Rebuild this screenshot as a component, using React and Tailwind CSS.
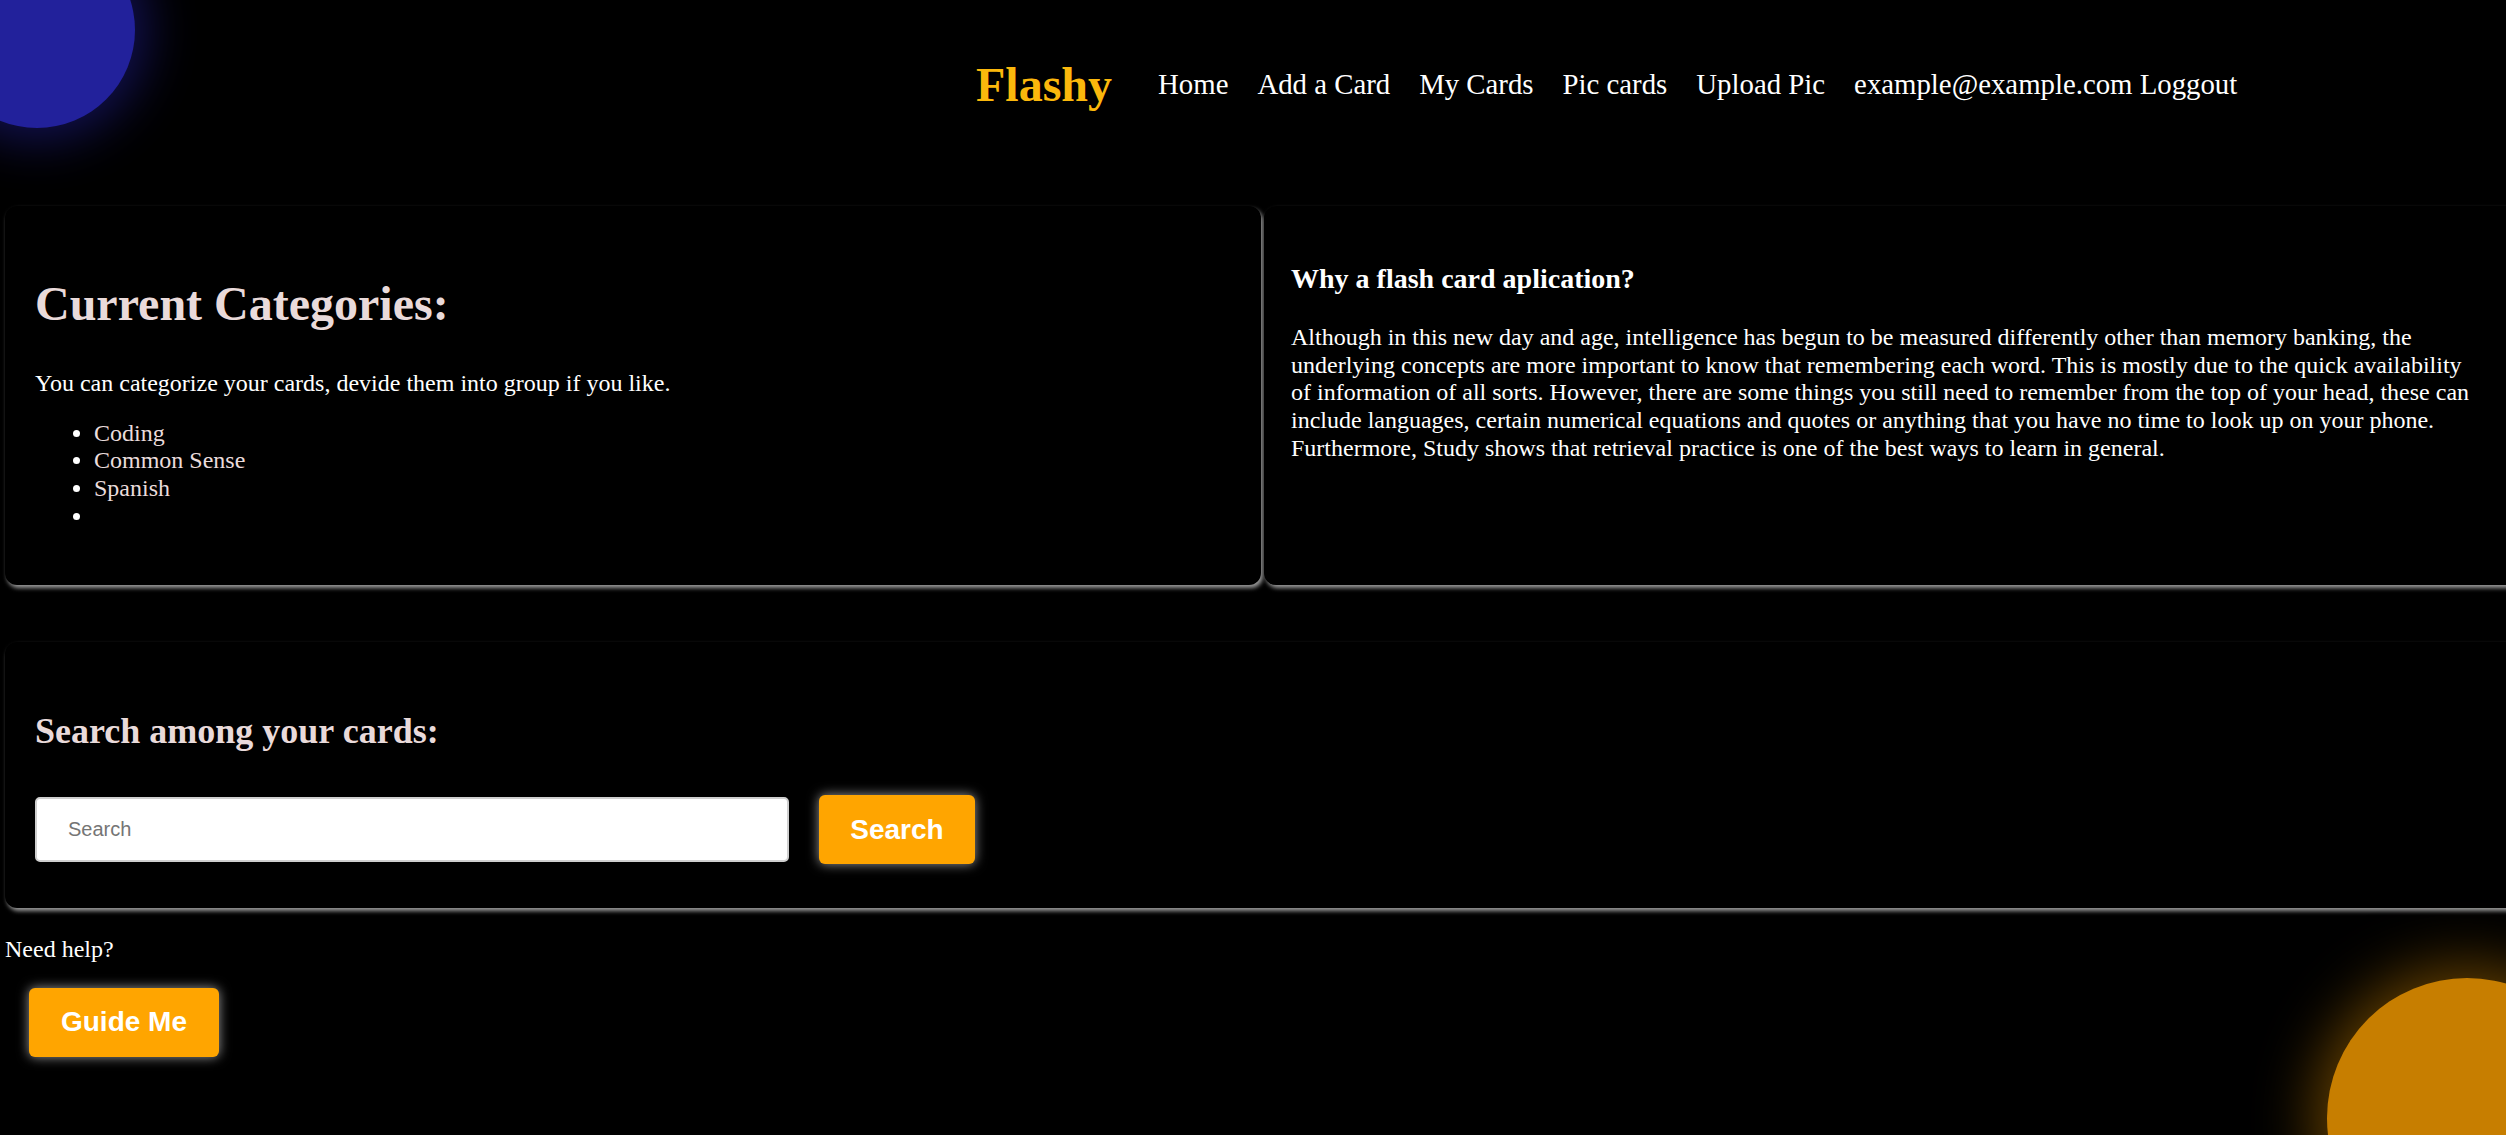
import { useState } from 'react';

const navLinks = ['Home', 'Add a Card', 'My Cards', 'Pic cards', 'Upload Pic', 'example@example.com Loggout'];
const categories = ['Coding', 'Common Sense', 'Spanish', '\u00a0'];

function NavBar() {
  return (
    <nav className="flex items-center h-[170px] pl-[976px]">
      <span className="text-[48px] font-bold text-[#fbb80c] leading-[1.15]">Flashy</span>
      <div className="flex items-center gap-[29px] ml-[46px]">
        {navLinks.map((link) => (
          <a key={link} href="#" className="text-[28.8px] leading-[1.15] text-white whitespace-nowrap">
            {link}
          </a>
        ))}
      </div>
    </nav>
  );
}

function Card({ className, children }) {
  return (
    <div className={`bg-black rounded-[12px] shadow-[2px_3px_4px_#9a9a9a] shrink-0 ${className}`}>
      {children}
    </div>
  );
}

export default function App() {
  const [query, setQuery] = useState('');

  return (
    <div className="relative h-[1135px] w-full overflow-hidden bg-black text-white font-['Liberation_Serif',serif] leading-[1.15]">
      {/* glowing circles */}
      <div className="absolute left-[-61px] top-[-68px] w-[196px] h-[196px] rounded-full bg-[#22219b] shadow-[0_0_50px_12px_rgba(34,33,155,0.55)]"></div>
      <div className="absolute left-[2327px] top-[978px] w-[280px] h-[280px] rounded-full bg-[#c77e00] shadow-[0_0_60px_12px_rgba(200,127,0,0.5)]"></div>

      <NavBar />

      {/* Top cards */}
      <div className="flex gap-[3px] pl-[5px] mt-[36px]">
        <Card className="w-[1256px] h-[379px] pl-[30px] pt-[70px]">
          <h1 className="text-[48px] font-bold text-[#e9dada]">Current Categories:</h1>
          <p className="text-[24px] mt-[39px]">You can categorize your cards, devide them into group if you like.</p>
          <ul className="list-disc pl-[59px] mt-[22px] text-[24px] marker:text-white">
            {categories.map((c, i) => (
              <li key={i} className="text-[#eadcdc]">{c}</li>
            ))}
          </ul>
        </Card>
        <Card className="w-[1270px] h-[379px] pl-[27px] pt-[57px]">
          <h3 className="text-[28px] font-bold">Why a flash card aplication?</h3>
          <p className="text-[24px] mt-[29px] w-[1186px]">
            Although in this new day and age, intelligence has begun to be measured differently other than memory banking, the underlying concepts are more important to know that remembering each word. This is mostly due to the quick availability of information of all sorts. However, there are some things you still need to remember from the top of your head, these can include languages, certain numerical equations and quotes or anything that you have no time to look up on your phone. Furthermore, Study shows that retrieval practice is one of the best ways to learn in general.
          </p>
        </Card>
      </div>

      {/* Search card */}
      <Card className="ml-[5px] mt-[57px] w-[2530px] h-[266px] pl-[30px] pt-[69px]">
        <h2 className="text-[36px] font-bold text-[#e9dada]">Search among your cards:</h2>
        <form
          className="flex items-center gap-[30px] mt-[43px]"
          onSubmit={(e) => e.preventDefault()}
        >
          <input
            type="text"
            value={query}
            onChange={(e) => setQuery(e.target.value)}
            placeholder="Search"
            className="w-[754px] h-[65px] bg-white border-2 border-[#cfcfcf] rounded-[5px] px-[31px] text-[20px] text-black font-['Liberation_Sans',sans-serif] placeholder:text-[#757575] focus:outline-none"
          />
          <button
            type="submit"
            className="w-[156px] h-[69px] bg-[#ffa500] rounded-[6px] text-white text-[28px] font-bold font-['Liberation_Sans',sans-serif] shadow-[0_0_12px_rgba(255,255,255,0.6)]"
          >
            Search
          </button>
        </form>
      </Card>

      {/* Help */}
      <p className="text-[24px] pl-[5px] mt-[28px]">Need help?</p>
      <button className="ml-[29px] mt-[24px] w-[190px] h-[69px] bg-[#ffa500] rounded-[6px] text-white text-[28px] font-bold font-['Liberation_Sans',sans-serif] shadow-[0_0_12px_rgba(255,255,255,0.6)]">
        Guide Me
      </button>
    </div>
  );
}
